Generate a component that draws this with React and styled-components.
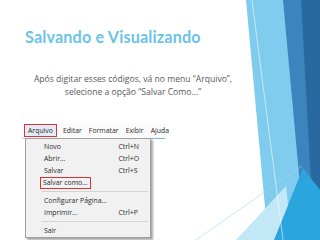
import React from 'react';
import styled, { createGlobalStyle } from 'styled-components';

const GlobalStyle = createGlobalStyle`
  html, body {
    margin: 0;
    padding: 0;
    background: #ffffff;
  }
`;

const Slide = styled.div`
  position: relative;
  width: 320px;
  height: 240px;
  overflow: hidden;
  background: #ffffff;
  font-family: 'Open Sans', 'Noto Sans', sans-serif;
`;

const Decoration = styled.svg`
  position: absolute;
  left: 0;
  top: 0;
  width: 320px;
  height: 240px;
  pointer-events: none;
`;

const Content = styled.div`
  position: relative;
  display: flex;
  flex-direction: column;
  padding: 27px 0 0 25px;
`;

const Title = styled.h1`
  margin: 0;
  font-family: 'Lato', 'Open Sans', sans-serif;
  font-weight: 700;
  font-size: 16.2px;
  line-height: 20px;
  color: #6ac4e7;
  letter-spacing: 0.15px;
`;

const Body = styled.p`
  margin: 26px 0 0 -3px;
  width: 222px;
  font-family: 'Open Sans', sans-serif;
  font-size: 8.6px;
  line-height: 13px;
  color: #5a5a5a;
  text-align: center;
`;

const Window = styled.div`
  position: relative;
  margin: 24px 0 0 -3px;
  width: 143px;
  height: 113px;
  background: #ffffff;
  font-family: 'Open Sans', 'Noto Sans', sans-serif;
  font-size: 6.9px;
  color: #2a2a2a;
`;

const MenuBar = styled.div`
  display: flex;
  align-items: center;
  gap: 7px;
  height: 15px;
  padding-left: 3px;
  border-bottom: 1px solid #d7d7d7;
  background: #fbfbfb;
`;

const BarItem = styled.span`
  line-height: 11px;
  padding: 0 ${(p) => (p.active ? '3px' : '0')};
  outline: ${(p) => (p.active ? '1.5px solid #d8323a' : 'none')};
  background: ${(p) => (p.active ? '#e3ecf6' : 'transparent')};
`;

const BlueEdge = styled.div`
  position: absolute;
  top: 15px;
  left: 126px;
  right: 0;
  height: 1px;
  background: #7fb4e0;
`;

const Dropdown = styled.div`
  position: absolute;
  top: 15px;
  left: 3px;
  width: 124px;
  padding: 1px 0 1px;
  background: #f1f1f1;
  border: 1px solid #a0a0a0;
  box-shadow: 2px 2px 2px rgba(0, 0, 0, 0.35);
`;

const Item = styled.div`
  display: flex;
  align-items: center;
  height: 12px;
  padding-left: 18px;
`;

const Label = styled.span`
  width: 82px;
  line-height: 11px;
`;

const Boxed = styled.span`
  display: inline-block;
  line-height: 10px;
  padding: 0 2px;
  margin-left: -3px;
  outline: 1.5px solid #d8323a;
`;

const Shortcut = styled.span`
  margin-left: auto;
  padding-right: 8px;
  width: 26px;
`;

const Separator = styled.div`
  height: 6px;
  display: flex;
  align-items: center;
  padding-left: 16px;
  &::after {
    content: '';
    flex: 1;
    height: 1px;
    background: #d3d3d3;
    margin-right: 2px;
  }
`;

const items = [
  { label: 'Novo', key: 'Ctrl+N' },
  { label: 'Abrir...', key: 'Ctrl+O' },
  { label: 'Salvar', key: 'Ctrl+S' },
  { label: 'Salvar como...', boxed: true },
  { sep: true },
  { label: 'Configurar Página...' },
  { label: 'Imprimir...', key: 'Ctrl+P' },
  { sep: true },
  { label: 'Sair' },
];

function Art() {
  return (
    <Decoration viewBox="0 0 320 240">
      <polygon points="246,0 290,0 304,240 268,240" fill="#80ccee" />
      <polygon points="236,240 286,186 292,240" fill="#c2e7f7" />
      <polygon points="283,0 320,0 320,240 305,240" fill="#3b84be" />
      <polygon points="301,0 320,0 320,196 312,200" fill="#286a9f" />
      <polygon points="274,240 320,240 320,190 303,168" fill="#2aa5dd" />
      <line x1="252" y1="0" x2="283" y2="240" stroke="#ffffff" strokeOpacity="0.7" strokeWidth="0.8" />
      <line x1="196" y1="240" x2="302" y2="166" stroke="#9fd7f0" strokeWidth="0.6" />
    </Decoration>
  );
}

export default function App() {
  return (
    <>
      <GlobalStyle />
      <Slide>
        <Art />
        <Content>
          <Title>Salvando e Visualizando</Title>
          <Body>
            Após digitar esses códigos, vá no menu “Arquivo”,
            <br />
            selecione a opção “Salvar Como...”
          </Body>
          <Window>
            <MenuBar>
              <BarItem active>Arquivo</BarItem>
              <BarItem>Editar</BarItem>
              <BarItem>Formatar</BarItem>
              <BarItem>Exibir</BarItem>
              <BarItem>Ajuda</BarItem>
            </MenuBar>
            <BlueEdge />
            <Dropdown>
              {items.map((it, i) =>
                it.sep ? (
                  <Separator key={i} />
                ) : (
                  <Item key={i}>
                    <Label>{it.boxed ? <Boxed>{it.label}</Boxed> : it.label}</Label>
                    {it.key && <Shortcut>{it.key}</Shortcut>}
                  </Item>
                )
              )}
            </Dropdown>
          </Window>
        </Content>
      </Slide>
    </>
  );
}
